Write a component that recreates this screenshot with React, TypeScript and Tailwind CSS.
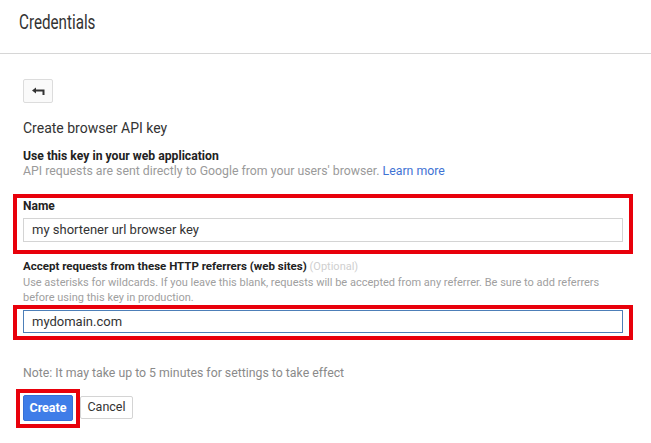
import React from 'react';

function BackArrow() {
  return (
    <svg width="14" height="9" viewBox="0 0 14 9" fill="none">
      <path d="M1 3.5 L5 0.5 V6.5 Z" fill="#333" />
      <path d="M4 3.5 H12.5 V8" stroke="#333" strokeWidth="2" />
    </svg>
  );
}

export default function App() {
  return (
    <div className="w-[651px] h-[443px] bg-white overflow-hidden font-['Roboto',Arial,sans-serif] text-[#222]">
      <header className="h-[54px] border-b border-[#d6d6d6] pl-[19px] pt-[9px]">
        <h1 className="text-[20px] leading-[26px] text-[#333] scale-x-[0.76] origin-left">Credentials</h1>
      </header>

      <div className="pl-[23px] w-[623px]">
        <button className="mt-[25px] w-[30px] h-[24px] flex items-center justify-center border border-[#dcdcdc] rounded-[2px] bg-[#fafafa]">
          <BackArrow />
        </button>

        <h2 className="mt-[15px] text-[14px] leading-[20px] text-[#333]">Create browser API key</h2>

        <p className="mt-[10px] text-[12.2px] leading-[16px] font-bold text-[#222]">Use this key in your web application</p>
        <p className="text-[12.3px] leading-[15px] text-[#9a9a9a]">
          API requests are sent directly to Google from your users' browser.{' '}
          <span className="text-[#3f73d4]">Learn more</span>
        </p>

        <div className="mt-[15px] -mx-[10px] border-4 border-[#e8000b] px-[6px] pt-0 pb-[8px]">
          <label className="block text-[12px] leading-[17px] font-bold text-[#222]">Name</label>
          <div className="mt-[3px] h-[24px] border border-[#d4d4d4] flex items-center pl-[8px] text-[13px] text-[#333]">
            my shortener url browser key
          </div>
        </div>

        <p className="mt-[4px] text-[11.5px] leading-[16px] font-bold text-[#222]">
          Accept requests from these HTTP referrers (web sites){' '}
          <span className="font-normal text-[11px] text-[#cfcfcf]">(Optional)</span>
        </p>
        <p className="max-w-[590px] text-[11px] leading-[15px] text-[#a0a0a0]">
          Use asterisks for wildcards. If you leave this blank, requests will be accepted from any referrer. Be sure to add referrers before using this key in production.
        </p>

        <div className="-mx-[10px] border-4 border-[#e8000b] px-[6px] pt-[1px] pb-[3px]">
          <div className="h-[23px] border border-[#4d7fb8] flex items-center pl-[8px] text-[13px] text-[#333]">
            mydomain.com
          </div>
        </div>

        <p className="mt-[25px] text-[12.3px] leading-[16px] text-[#8a8a8a]">
          Note: It may take up to 5 minutes for settings to take effect
        </p>

        <div className="mt-[8px] flex items-start">
          <div className="-ml-[7px] border-4 border-[#e8000b] pt-[2px] px-[3px] pb-[3px]">
            <button className="block w-[50px] h-[26px] bg-[#3f7de8] border border-[#3670d6] rounded-[2px] text-white text-[12.5px] font-bold">
              Create
            </button>
          </div>
          <button className="mt-[7px] w-[53px] h-[23px] bg-white border border-[#d4d4d4] rounded-[2px] text-[12.5px] text-[#333]">
            Cancel
          </button>
        </div>
      </div>
    </div>
  );
}
